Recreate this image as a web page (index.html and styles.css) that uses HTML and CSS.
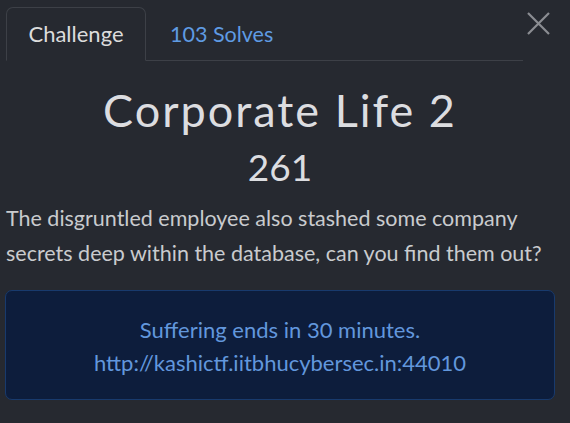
FILE: index.html
```html
<!DOCTYPE html>
<html>
<head>
<meta charset="utf-8">
<link rel="stylesheet" href="styles.css">
</head>
<body>
<div class="modal">
  <div class="header">
    <ul class="tabs">
      <li class="tab active">Challenge</li>
      <li class="tab link">103 Solves</li>
    </ul>
    <button class="close" aria-label="Close">
      <svg width="23" height="23" viewBox="0 0 23 23"><path d="M1 1 L22 22 M22 1 L1 22" stroke="#8b8d92" stroke-width="2.2" fill="none"/></svg>
    </button>
  </div>
  <div class="body">
    <h2 class="title">Corporate Life 2</h2>
    <h3 class="value">261</h3>
    <p class="desc">The disgruntled employee also stashed some company secrets deep within the database, can you find them out?</p>
    <div class="alert">
      <div>Suffering ends in 30 minutes.</div>
      <div>http://kashictf.iitbhucybersec.in:44010</div>
    </div>
  </div>
</div>
</body>
</html>
```
FILE: styles.css
```css
html, body {
  margin: 0;
  padding: 0;
  background: #262930;
  width: 570px;
  height: 423px;
  overflow: hidden;
}
body {
  font-family: Lato, "Open Sans", sans-serif;
  color: #d6d7da;
}
.modal {
  padding: 7px 15px 0 5px;
}
.header {
  display: flex;
  align-items: flex-start;
  padding-right: 5px;
}
.tabs {
  list-style: none;
  margin: 0 0 0 1px;
  padding: 0;
  display: flex;
  flex: 1;
  border-bottom: 1px solid #3d4047;
  height: 54px;
  box-sizing: border-box;
}
.tab {
  font-size: 22px;
  line-height: 52px;
  height: 53px;
  box-sizing: border-box;
}
.tab.active {
  border: 1px solid #3d4047;
  border-bottom: 1px solid #262930;
  border-radius: 7px 7px 0 0;
  background: #262930;
  color: #dcdcdc;
  height: 54px;
  width: 140px;
  text-align: center;
  padding: 0;
}
.tab.link {
  color: #5f9be3;
  font-size: 21.5px;
  padding: 1px 0 0 24px;
}
.close {
  background: none;
  border: 0;
  padding: 0;
  margin: 5px 0 0 4px;
  width: 23px;
  height: 23px;
  cursor: pointer;
  display: block;
}
.close svg {
  display: block;
}
.body {
  text-align: center;
}
.title {
  margin: 22px 0 0;
  font-weight: 400;
  font-size: 45px;
  letter-spacing: 2px;
  line-height: 54px;
  color: #dcdde0;
}
.value {
  margin: 8px 0 0;
  font-weight: 400;
  font-size: 37px;
  line-height: 44px;
  color: #dcdde0;
}
.desc {
  text-align: left;
  margin: 12px 0 0 1px;
  font-size: 21.5px;
  line-height: 35px;
  color: #c9cbce;
}
.alert {
  margin-top: 19px;
  border: 1px solid #183a6d;
  border-radius: 7px;
  background: #0d1d3c;
  color: #6297dc;
  font-size: 22px;
  line-height: 33px;
  padding: 22px 0 20px;
}
```
